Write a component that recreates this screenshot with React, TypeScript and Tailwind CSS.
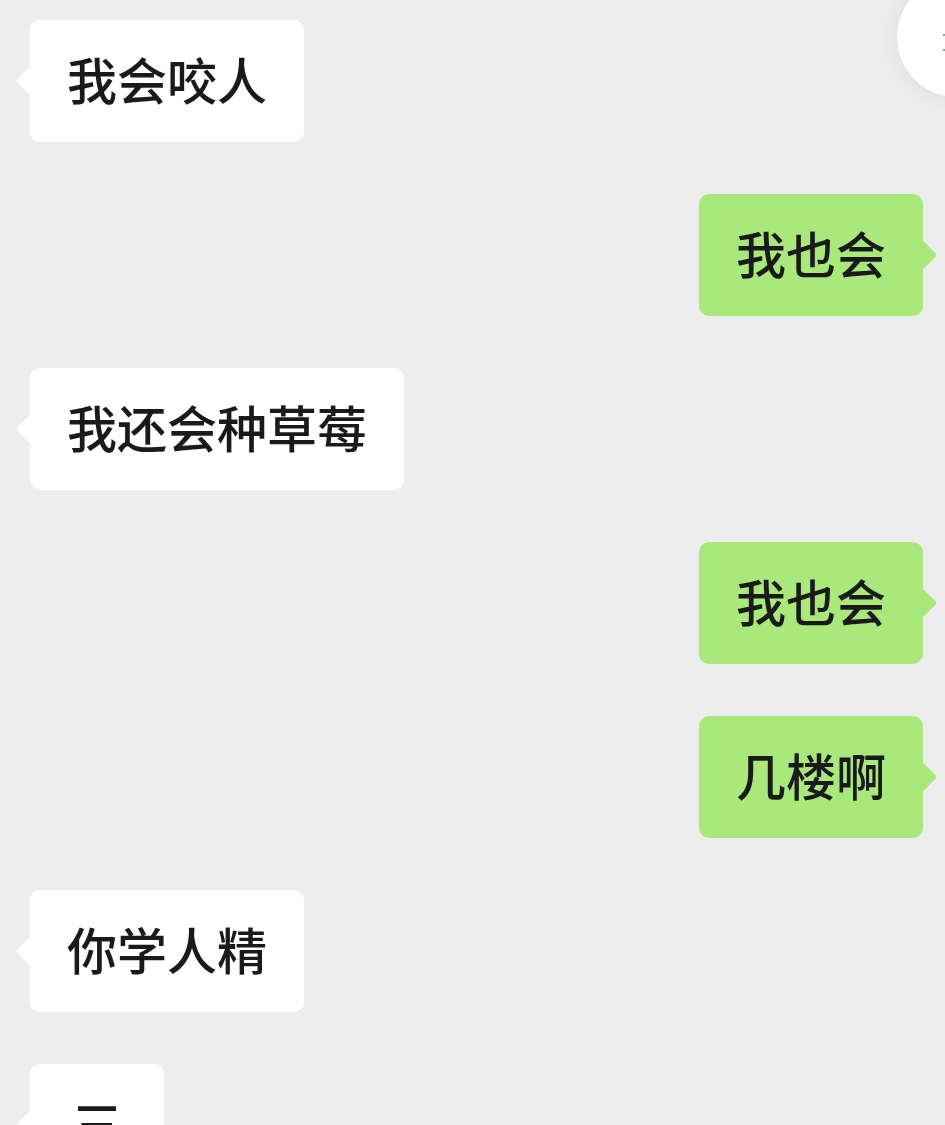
const messages: { side: "left" | "right"; text: string }[] = [
  { side: "left", text: "我会咬人" },
  { side: "right", text: "我也会" },
  { side: "left", text: "我还会种草莓" },
  { side: "right", text: "我也会" },
  { side: "right", text: "几楼啊" },
  { side: "left", text: "你学人精" },
  { side: "left", text: "三" },
];

function Bubble({ side, text }: { side: "left" | "right"; text: string }) {
  const isLeft = side === "left";
  return (
    <div className={`flex ${isLeft ? "justify-start pl-[30px]" : "justify-end pr-[22px]"}`}>
      <div
        className={`relative h-[122px] min-w-[134px] rounded-[10px] px-[37px] flex items-center justify-center ${
          isLeft ? "bg-white" : "bg-[#a9e97b]"
        }`}
      >
        {/* tail */}
        <div
          className={`absolute top-1/2 -translate-y-1/2 w-[21px] h-[21px] rotate-45 rounded-[3px] ${
            isLeft ? "-left-[10px] bg-white" : "-right-[10px] bg-[#a9e97b]"
          }`}
        />
        <span className="relative -top-[3px] text-[50px] leading-none font-medium text-[#1a1a1a] whitespace-nowrap">
          {text}
        </span>
      </div>
    </div>
  );
}

export default function App() {
  return (
    <div
      className="relative h-[1125px] w-[945px] overflow-hidden bg-[#ededed]"
      style={{ fontFamily: '"Noto Sans CJK SC", "Noto Sans", sans-serif' }}
    >
      {/* floating button, top right */}
      <div className="absolute left-[897px] -top-[23px] w-[120px] h-[120px] rounded-full bg-white shadow-[0_0_24px_rgba(0,0,0,0.08)]">
        <div className="absolute left-[46px] top-[57px] w-[3px] h-[2px] bg-[#6cb8a8]" />
        <div className="absolute left-[46px] top-[72px] w-[3px] h-[2px] bg-[#6cb8a8]" />
      </div>

      <div className="flex flex-col gap-[52px] pt-[20px]">
        {messages.map((m, i) => (
          <Bubble key={i} side={m.side} text={m.text} />
        ))}
      </div>
    </div>
  );
}
